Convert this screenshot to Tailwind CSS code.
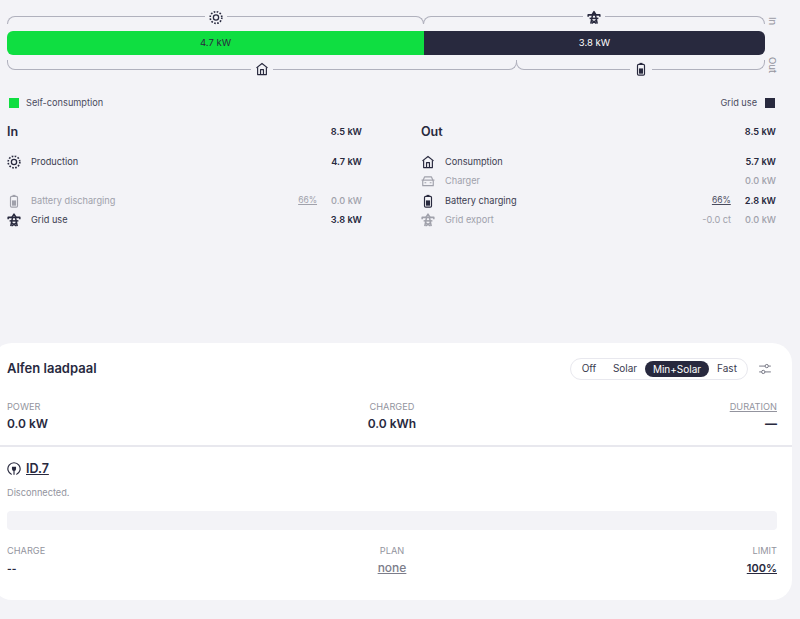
<!DOCTYPE html>
<html lang="en">
<head>
  <meta charset="UTF-8">
  <title>Energy overview</title>
  <script src="https://cdn.jsdelivr.net/npm/@tailwindcss/browser@4"></script>
</head>
<body class="bg-[#f3f3f7] text-[#28293e] font-['Inter',sans-serif] h-[619px] overflow-hidden">
  <svg class="hidden">
    <symbol id="sun" viewBox="0 0 24 24" fill="none" stroke="currentColor" stroke-width="2.2">
      <circle cx="12" cy="12" r="4.500"/>
      <circle cx="12" cy="12" r="10" stroke-dasharray="2.800 2.436" stroke-width="2.800"/>
    </symbol>
    <symbol id="home" viewBox="0 0 24 24" fill="none" stroke="currentColor" stroke-width="2" stroke-linejoin="round">
      <path d="M2.5 10 12 2.5 21.5 10"/>
      <path d="M4.5 9v12.5h15V9"/>
      <path d="M9.5 21.5V13h5v8.5"/>
    </symbol>
    <symbol id="tower" viewBox="0 0 24 24" fill="none" stroke="currentColor" stroke-width="2.6" stroke-linejoin="round">
      <path d="M2 10.500V7.500h20v3"/>
      <path d="M4.500 13.500h15"/>
      <path d="M8.500 7.500 12 2l3.500 5.500"/>
      <path d="M9.500 7.500 6.500 22.500M14.500 7.500l3 15"/>
      <path d="M8 17l8 5M16 17l-8 5"/>
    </symbol>
    <symbol id="battery" viewBox="0 0 24 24" fill="none" stroke="currentColor" stroke-width="2">
      <rect x="6" y="4" width="12" height="18.500" rx="2"/>
      <path d="M9.500 2.500h5"/>
      <rect x="8.500" y="11" width="7" height="9" fill="currentColor" stroke="none"/>
    </symbol>
    <symbol id="car" viewBox="0 0 24 24" fill="none" stroke="currentColor" stroke-width="2" stroke-linejoin="round">
      <path d="M3.500 11 6 5h12l2.500 6"/>
      <path d="M1 10.500h22"/>
      <path d="M3 11v9h18v-9"/>
      <path d="M6 15h3M15 15h3"/>
    </symbol>
    <symbol id="sliders" viewBox="0 0 24 24" fill="none" stroke="currentColor" stroke-width="1.600">
      <path d="M2 7h10M18 7h4M2 17h4M12 17h10"/>
      <circle cx="15" cy="7" r="2.800"/>
      <circle cx="9" cy="17" r="2.800"/>
    </symbol>
    <symbol id="vehicle" viewBox="0 0 24 24" fill="none" stroke="currentColor" stroke-width="2">
      <path d="M8 21.500a10.500 10.500 0 1 1 8 0"/>
      <path d="M8.500 8v4a3.500 3.500 0 0 0 7 0V8z" fill="currentColor" stroke="none"/>
      <path d="M12 14v8"/>
    </symbol>
  </svg>

  <div class="px-[7px] pt-[13px]">
    <!-- flow bar -->
    <div class="flex w-[790px]">
      <div class="w-[758px]">
        <div class="flex h-[11px] text-[#b0b1bd]">
          <div class="relative w-[417px] border-t border-l border-r border-current rounded-t-[8px] mt-[3px]">
            <svg class="absolute left-1/2 -top-[8px] -ml-[11px] w-[22px] h-[17px] px-[4px] bg-[#f3f3f7] text-[#28293e]"><use href="#sun"/></svg>
          </div>
          <div class="relative flex-1 -ml-px border-t border-l border-r border-current rounded-t-[8px] mt-[3px]">
            <svg class="absolute left-1/2 -top-[8px] -ml-[11px] w-[22px] h-[17px] px-[4px] bg-[#f3f3f7] text-[#28293e]"><use href="#tower"/></svg>
          </div>
        </div>
        <div class="flex h-[24px] mt-[7px] rounded-[6px] overflow-hidden text-[9.500px]">
          <div class="w-[417px] bg-[#0fde41] flex items-center justify-center">4.7 kW</div>
          <div class="flex-1 bg-[#28293e] text-white flex items-center justify-center">3.8 kW</div>
        </div>
        <div class="flex h-[10px] mt-[5px] text-[#b0b1bd]">
          <div class="relative w-[510px] border-b border-l border-r border-current rounded-b-[8px]">
            <svg class="absolute left-1/2 -bottom-[8px] -ml-[11px] w-[22px] h-[16px] px-[4px] bg-[#f3f3f7] text-[#28293e]"><use href="#home"/></svg>
          </div>
          <div class="relative flex-1 -ml-px border-b border-l border-r border-current rounded-b-[8px]">
            <svg class="absolute left-1/2 -bottom-[8px] -ml-[11px] w-[22px] h-[16px] px-[4px] bg-[#f3f3f7] text-[#28293e]"><use href="#battery"/></svg>
          </div>
        </div>
      </div>
      <div class="flex flex-col pl-[2px] text-[9.500px] text-[#93949e] leading-[10px]">
        <span class="[writing-mode:vertical-rl] mt-[4px]">In</span>
        <span class="[writing-mode:vertical-rl] mt-[32px]">Out</span>
      </div>
    </div>

    <!-- legend -->
    <div class="flex justify-between items-center w-[769px] mt-[23px] pl-[2px] pr-[1px] text-[9.200px] text-[#4a4b5e]">
      <div class="flex items-center gap-[7px]"><span class="w-[10px] h-[10px] bg-[#0fde41]"></span>Self-consumption</div>
      <div class="flex items-center gap-[8px]">Grid use<span class="w-[10px] h-[10px] bg-[#28293e]"></span></div>
    </div>

    <!-- in / out -->
    <div class="grid grid-cols-[355px_355px] gap-x-[59px] mt-[14px] text-[9.200px]">
      <div>
        <div class="flex justify-between items-center h-[16px]">
          <span class="text-[12.500px] font-semibold">In</span><span class="font-semibold">8.5 kW</span>
        </div>
        <div class="mt-[12px]">
          <div class="flex items-center h-[19.500px]">
            <svg class="w-[14px] h-[14px] mr-[10px]"><use href="#sun"/></svg><span class="flex-1 text-[#3b3c50]">Production</span><span class="font-semibold">4.7 kW</span>
          </div>
          <div class="h-[19.500px]"></div>
          <div class="flex items-center h-[19.500px] text-[#a0a1ab]">
            <svg class="w-[14px] h-[14px] mr-[10px]"><use href="#battery"/></svg><span class="flex-1">Battery discharging</span><span class="underline text-[8.500px] mr-[14px]">66%</span><span class="font-medium">0.0 kW</span>
          </div>
          <div class="flex items-center h-[19.500px]">
            <svg class="w-[14px] h-[14px] mr-[10px]"><use href="#tower"/></svg><span class="flex-1 text-[#3b3c50]">Grid use</span><span class="font-semibold">3.8 kW</span>
          </div>
        </div>
      </div>
      <div>
        <div class="flex justify-between items-center h-[16px]">
          <span class="text-[12.500px] font-semibold">Out</span><span class="font-semibold">8.5 kW</span>
        </div>
        <div class="mt-[12px]">
          <div class="flex items-center h-[19.500px]">
            <svg class="w-[14px] h-[14px] mr-[10px]"><use href="#home"/></svg><span class="flex-1 text-[#3b3c50]">Consumption</span><span class="font-semibold">5.7 kW</span>
          </div>
          <div class="flex items-center h-[19.500px] text-[#a0a1ab]">
            <svg class="w-[14px] h-[14px] mr-[10px]"><use href="#car"/></svg><span class="flex-1">Charger</span><span class="font-medium">0.0 kW</span>
          </div>
          <div class="flex items-center h-[19.500px]">
            <svg class="w-[14px] h-[14px] mr-[10px]"><use href="#battery"/></svg><span class="flex-1 text-[#3b3c50]">Battery charging</span><span class="underline text-[8.500px] mr-[14px] text-[#4a4b5e]">66%</span><span class="font-semibold">2.8 kW</span>
          </div>
          <div class="flex items-center h-[19.500px] text-[#a0a1ab]">
            <svg class="w-[14px] h-[14px] mr-[10px]"><use href="#tower"/></svg><span class="flex-1">Grid export</span><span class="mr-[14px]">-0.0 ct</span><span class="font-medium">0.0 kW</span>
          </div>
        </div>
      </div>
    </div>
  </div>

  <!-- loadpoint card -->
  <div class="-ml-[8px] mt-[113px] w-[800px] h-[257px] bg-white rounded-[20px] pt-[15px]">
    <div class="px-[15px]">
      <div class="flex items-center justify-between h-[22px]">
        <span class="text-[13px] font-semibold">Alfen laadpaal</span>
        <div class="flex items-center">
          <div class="flex items-center h-[22px] w-[178px] border border-[#e8e8ee] rounded-full pl-[2px] text-[10px] text-[#3b3c50]">
            <span class="w-[32px] text-center">Off</span>
            <span class="w-[40px] text-center">Solar</span>
            <span class="w-[64px] h-[16px] leading-[16px] text-center rounded-full bg-[#28293e] text-white">Min+Solar</span>
            <span class="w-[36px] text-center">Fast</span>
          </div>
          <svg class="w-[14px] h-[14px] ml-[10px] mr-[5px] text-[#6e6f7d]"><use href="#sliders"/></svg>
        </div>
      </div>

      <div class="grid grid-cols-3 mt-[21px]">
        <div>
          <div class="h-[12px] leading-[12px] text-[9.200px] text-[#93949e]">POWER</div>
          <div class="mt-[3px] h-[16px] leading-[16px] text-[12px] font-semibold">0.0 kW</div>
        </div>
        <div class="text-center">
          <div class="h-[12px] leading-[12px] text-[9.200px] text-[#93949e]">CHARGED</div>
          <div class="mt-[3px] h-[16px] leading-[16px] text-[12px] font-semibold">0.0 kWh</div>
        </div>
        <div class="text-right">
          <div class="h-[12px] leading-[12px] text-[9.200px] text-[#93949e] underline">DURATION</div>
          <div class="mt-[3px] h-[16px] leading-[16px] text-[12px] font-bold">—</div>
        </div>
      </div>
    </div>

    <div class="h-[2px] mt-[13px] bg-[#e8e8ee]"></div>

    <div class="px-[15px]">
      <div class="flex items-center h-[16px] mt-[14px]">
        <svg class="w-[14px] h-[14px] mr-[5px]"><use href="#vehicle"/></svg>
        <span class="text-[12.500px] font-semibold underline">ID.7</span>
      </div>
      <div class="h-[12px] leading-[12px] mt-[10px] text-[9.200px] text-[#93949e]">Disconnected.</div>
      <div class="h-[19px] mt-[12px] bg-[#f3f3f7] rounded-[4px]"></div>
      <div class="grid grid-cols-3 mt-[15px]">
        <div>
          <div class="h-[12px] leading-[12px] text-[9.200px] text-[#93949e]">CHARGE</div>
          <div class="mt-[3px] h-[16px] leading-[16px] text-[10px] font-bold">--</div>
        </div>
        <div class="text-center">
          <div class="h-[12px] leading-[12px] text-[9.200px] text-[#93949e]">PLAN</div>
          <div class="mt-[3px] h-[16px] leading-[16px] text-[12px] font-medium text-[#7c7d8a] underline">none</div>
        </div>
        <div class="text-right">
          <div class="h-[12px] leading-[12px] text-[9.200px] text-[#93949e]">LIMIT</div>
          <div class="mt-[3px] h-[16px] leading-[16px] text-[11px] font-semibold underline">100%</div>
        </div>
      </div>
    </div>
  </div>
</body>
</html>
